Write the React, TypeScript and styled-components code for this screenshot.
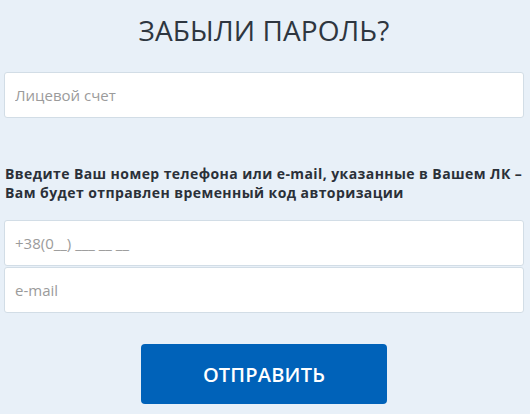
import React from "react";
import styled, { createGlobalStyle } from "styled-components";

const GlobalStyle = createGlobalStyle`
  html, body {
    margin: 0;
    padding: 0;
    background: #e8f0f8;
  }
  body {
    font-family: "Open Sans", "Noto Sans", sans-serif;
  }
  * {
    box-sizing: border-box;
  }
`;

const Page = styled.div`
  width: 530px;
  height: 414px;
  padding: 12px 6px 0 4px;
  display: flex;
  flex-direction: column;
`;

const Title = styled.h1`
  margin: 0;
  text-align: center;
  font-size: 28px;
  font-weight: 400;
  line-height: 36px;
  color: #2e3640;
  letter-spacing: 0.1px;
`;

const Field = styled.input<{ $top?: number }>`
  display: block;
  width: 100%;
  height: 46px;
  margin-top: ${(p) => p.$top ?? 0}px;
  padding: 0 10px;
  border: 1px solid #d2dde6;
  border-radius: 3px;
  background: #fff;
  font-family: inherit;
  font-size: 15px;
  color: #333;
  outline: none;

  &::placeholder {
    color: #9b9b9b;
  }
`;

const Hint = styled.p`
  margin: 46px 0 0 1px;
  font-size: 14px;
  font-weight: 700;
  line-height: 19px;
  letter-spacing: 0.42px;
  color: #2b3038;
`;

const Actions = styled.div`
  display: flex;
  justify-content: center;
  margin-top: 31px;
`;

const SubmitButton = styled.button`
  width: 246px;
  height: 60px;
  border: none;
  border-radius: 4px;
  background: #0062b9;
  color: #fff;
  font-family: inherit;
  font-size: 20px;
  font-weight: 600;
  letter-spacing: 0.2px;
  cursor: pointer;
`;

export default function App() {
  return (
    <>
      <GlobalStyle />
      <Page>
        <Title>ЗАБЫЛИ ПАРОЛЬ?</Title>
        <Field $top={24} placeholder="Лицевой счет" />
        <Hint>
          Введите Ваш номер телефона или e-mail, указанные в Вашем ЛК&nbsp;–
          <br />
          Вам будет отправлен временный код авторизации
        </Hint>
        <Field $top={18} placeholder="+38(0__) ___ __ __" />
        <Field $top={1} placeholder="e-mail" />
        <Actions>
          <SubmitButton type="button">ОТПРАВИТЬ</SubmitButton>
        </Actions>
      </Page>
    </>
  );
}
